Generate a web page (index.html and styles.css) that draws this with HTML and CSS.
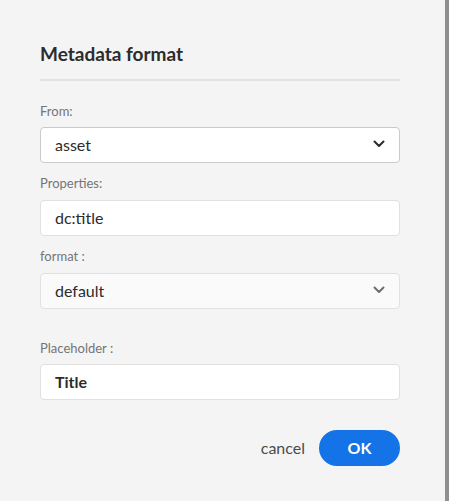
FILE: index.html
```html
<!DOCTYPE html>
<html lang="en">
<head>
    <meta charset="UTF-8">
    <meta name="viewport" content="width=device-width, initial-scale=1.0">
    <title>Metadata format</title>
    <link rel="stylesheet" href="styles.css">
</head>
<body>

<div class="dialog">
    <div class="dialog-header">
        <h2>Metadata format</h2>
    </div>

    <!-- From -->
    <label class="field-label first">From:</label>
    <div class="field select">
        <span>asset</span>
        <svg class="chevron" width="12" height="8" viewBox="0 0 12 8"><path d="M1.5 1.5 L6 6 L10.5 1.5" fill="none" stroke="#2c2c2c" stroke-width="2" stroke-linecap="round" stroke-linejoin="round"/></svg>
    </div>

    <!-- Properties -->
    <label class="field-label">Properties:</label>
    <div class="field text">
        <span>dc:title</span>
    </div>

    <!-- Format -->
    <label class="field-label">format :</label>
    <div class="field select quiet">
        <span>default</span>
        <svg class="chevron" width="12" height="8" viewBox="0 0 12 8"><path d="M1.5 1.5 L6 6 L10.5 1.5" fill="none" stroke="#6e6e6e" stroke-width="2" stroke-linecap="round" stroke-linejoin="round"/></svg>
    </div>

    <!-- Placeholder -->
    <label class="field-label spaced">Placeholder :</label>
    <div class="field text">
        <span class="bold">Title</span>
    </div>

    <div class="actions">
        <button class="cancel-btn">cancel</button>
        <button class="ok-btn">OK</button>
    </div>
</div>

<div class="edge"></div>

</body>
</html>
```

FILE: styles.css
```css
/* General Styling */
* {
    box-sizing: border-box;
    margin: 0;
    padding: 0;
    font-family: Lato, "Open Sans", sans-serif;
}

body {
    height: 100vh;
    display: flex;
    background: #f4f4f4;
    color: #2c2c2c;
    overflow: hidden;
}

.dialog {
    flex: 1;
    padding: 42px 45px 0 40px;
    display: flex;
    flex-direction: column;
}

.edge {
    width: 4px;
    background: #8f8f8f;
}

.dialog-header {
    padding-bottom: 13px;
    border-bottom: 2px solid #e1e1e1;
}

h2 {
    font-size: 19px;
    line-height: 24px;
    font-weight: 700;
    color: #2c2c2c;
}

.field-label {
    display: block;
    font-size: 13px;
    line-height: 18px;
    color: #747474;
    margin-top: 11px;
    margin-bottom: 8px;
}

.field-label.first {
    margin-top: 21px;
    margin-bottom: 7px;
}

.field-label.spaced {
    margin-top: 30px;
    margin-bottom: 7px;
}

.field {
    height: 36px;
    display: flex;
    align-items: center;
    justify-content: space-between;
    padding: 0 14px 2px 14px;
    background: white;
    border: 1px solid #e1e1e1;
    border-radius: 4px;
    font-size: 16px;
    color: #2c2c2c;
}

.select {
    border-color: #cacaca;
}

.select.quiet {
    background: #fafafa;
    border-color: #e1e1e1;
}

.bold {
    font-weight: 700;
}

.actions {
    margin-top: 30px;
    display: flex;
    justify-content: flex-end;
    align-items: center;
    gap: 14px;
}

button {
    border: none;
    background: none;
    font-size: 16px;
    padding-bottom: 2px;
    cursor: pointer;
}

.cancel-btn {
    color: #4b4b4b;
}

.ok-btn {
    width: 81px;
    height: 36px;
    border-radius: 18px;
    background-color: #1473e6;
    color: white;
    font-weight: 700;
}

.ok-btn:hover {
    background-color: #0d66d0;
}
```
